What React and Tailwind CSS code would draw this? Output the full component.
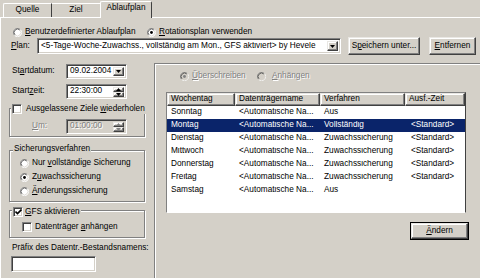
import React from 'react';

const sunken =
  'border border-t-[#808080] border-l-[#808080] border-b-white border-r-white shadow-[inset_1px_1px_0_#404040,inset_-1px_-1px_0_#d4d0c8]';
const raised =
  'border border-t-[#e9e7e3] border-l-[#e9e7e3] border-b-[#404040] border-r-[#404040] shadow-[inset_-1px_-1px_0_#808080,inset_1px_1px_0_#fff]';
const etched = 'border border-[#808080] shadow-[inset_1px_1px_0_#fff,1px_1px_0_#fff]';
const grayText = 'text-[#808080] [text-shadow:1px_1px_0_#fff]';

const Radio = ({ checked, disabled }) => (
  <svg width="9" height="9" viewBox="0 0 12 12" className="shrink-0">
    <circle cx="6" cy="6" r="5.5" fill={disabled ? '#d4d0c8' : '#fff'} />
    <path d="M2.1 9.9 A5.5 5.5 0 0 1 9.9 2.1" stroke="#808080" fill="none" />
    <path d="M2.8 9.2 A4.5 4.5 0 0 1 9.2 2.8" stroke="#404040" fill="none" />
    <path d="M9.9 2.1 A5.5 5.5 0 0 1 2.1 9.9" stroke="#fff" fill="none" />
    <path d="M9.2 2.8 A4.5 4.5 0 0 1 2.8 9.2" stroke="#d4d0c8" fill="none" />
    {checked && <circle cx="6" cy="6" r="1.9" fill={disabled ? '#808080' : '#000'} />}
  </svg>
);

const Check = ({ checked }) => (
  <span className={`w-[10px] h-[10px] shrink-0 bg-white flex items-center justify-center ${sunken}`}>
    {checked && (
      <svg width="7" height="6" viewBox="0 0 7 6">
        <path d="M0.5 2.5 L2.5 4.5 L6.5 0.5" stroke="#000" strokeWidth="1.6" fill="none" />
      </svg>
    )}
  </span>
);

const DropBtn = () => (
  <span className={`w-[11px] h-full shrink-0 bg-[#d4d0c8] flex items-center justify-center ${raised}`}>
    <svg width="5" height="3" viewBox="0 0 5 3">
      <path d="M0 0h5L2.5 3z" fill="#000" />
    </svg>
  </span>
);

const Spin = ({ disabled }) => {
  const c = disabled ? '#808080' : '#000';
  return (
    <span className="w-[11px] h-full shrink-0 flex flex-col">
      <span className={`flex-1 bg-[#d4d0c8] flex items-center justify-center ${raised}`}>
        <svg width="5" height="3" viewBox="0 0 5 3">
          <path d="M0 3h5L2.5 0z" fill={c} />
        </svg>
      </span>
      <span className={`flex-1 bg-[#d4d0c8] flex items-center justify-center ${raised}`}>
        <svg width="5" height="3" viewBox="0 0 5 3">
          <path d="M0 0h5L2.5 3z" fill={c} />
        </svg>
      </span>
    </span>
  );
};

const U = ({ children }) => <span className="underline underline-offset-1">{children}</span>;

const rows = [
  ['Sonntag', '<Automatische Na...', 'Aus', ''],
  ['Montag', '<Automatische Na...', 'Vollständig', '<Standard>'],
  ['Dienstag', '<Automatische Na...', 'Zuwachssicherung', '<Standard>'],
  ['Mittwoch', '<Automatische Na...', 'Zuwachssicherung', '<Standard>'],
  ['Donnerstag', '<Automatische Na...', 'Zuwachssicherung', '<Standard>'],
  ['Freitag', '<Automatische Na...', 'Zuwachssicherung', '<Standard>'],
  ['Samstag', '<Automatische Na...', 'Aus', ''],
];

const cols = ['w-[68px]', 'w-[85px]', 'w-[85px]', 'w-[60px]'];

export default function App() {
  return (
    <div className="w-[480px] h-[278px] overflow-hidden bg-[#d4d0c8] text-black text-[8.25px] leading-none whitespace-nowrap flex flex-col font-['Liberation_Sans',Arial,sans-serif]">
      {/* Tabs */}
      <div className="h-[17px] shrink-0 flex items-end pl-[3px] relative z-10">
        <div className="w-[49px] h-[14px] flex items-center justify-center border-t border-l border-white border-r border-r-[#404040] rounded-tl-[2px]">
          Quelle
        </div>
        <div className="w-[48px] h-[14px] flex items-center justify-center border-t border-white">
          Ziel
        </div>
        <div className="w-[52px] h-[17px] -mb-px pb-[3px] bg-[#d4d0c8] flex items-center justify-center border-t border-l border-white border-r border-r-[#404040] rounded-t-[2px]">
          Ablaufplan
        </div>
      </div>

      {/* Panel */}
      <div className="flex-1 border-t border-l border-white flex flex-col">
        <div className="mt-[9px] h-[10px] flex items-center pl-[12px]">
          <div className="w-[134px] flex items-center gap-[3px]">
            <Radio />
            <span>
              <U>B</U>enutzerdefinierter Ablaufplan
            </span>
          </div>
          <div className="flex items-center gap-[3px]">
            <Radio checked />
            <span>
              <U>R</U>otationsplan verwenden
            </span>
          </div>
        </div>

        <div className="h-[18px] flex items-center pl-[10px]">
          <span className="w-[26px]">
            <U>P</U>lan:
          </span>
          <div className={`w-[304px] h-[16px] bg-white flex items-center p-[2px] ${sunken}`}>
            <span className="flex-1 pl-px overflow-hidden">
              {'<5-Tage-Woche-Zuwachss., vollständig am Mon., GFS aktiviert> by Hevele'}
            </span>
            <DropBtn />
          </div>
          <button className={`ml-[7px] w-[72px] h-[18px] flex items-center justify-center ${raised}`}>
            <span>
              S<U>p</U>eichern unter...
            </span>
          </button>
          <button className={`ml-[9px] w-[47px] h-[18px] flex items-center justify-center ${raised}`}>
            <span>
              <U>E</U>ntfernen
            </span>
          </button>
        </div>

        <div className="flex mt-[8px]">
          {/* Left column */}
          <div className="ml-[8px] w-[136px] pt-px flex flex-col shrink-0">
            <div className="h-[15px] flex items-center pl-[3px]">
              <span className="w-[54px]">
                St<U>a</U>rtdatum:
              </span>
              <div className={`w-[61px] h-full bg-white flex items-center p-[2px] ${sunken}`}>
                <span className="flex-1 pl-px">09.02.2004</span>
                <DropBtn />
              </div>
            </div>
            <div className="mt-[5px] h-[15px] flex items-center pl-[3px]">
              <span className="w-[54px]">
                Start<U>z</U>eit:
              </span>
              <div className={`w-[61px] h-full bg-white flex items-center p-[2px] ${sunken}`}>
                <span className="flex-1 pl-px">22:30:00</span>
                <Spin />
              </div>
            </div>

            <div className={`mt-[9px] pb-[2px] flex flex-col ${etched}`}>
              <div className="-mt-[5px] ml-px px-px h-[10px] w-fit bg-[#d4d0c8] flex items-center gap-[4px]">
                <Check />
                <span>
                  Ausgelassene Ziele <U>w</U>iederholen
                </span>
              </div>
              <div className="mt-[5px] h-[15px] flex items-center">
                <span className={`w-[56px] pl-[22px] ${grayText}`}>
                  <U>U</U>m:
                </span>
                <div className={`w-[61px] h-full bg-[#d4d0c8] flex items-center p-[2px] ${sunken}`}>
                  <span className={`flex-1 pl-px ${grayText}`}>01:00:00</span>
                  <Spin disabled />
                </div>
              </div>
            </div>

            <div className={`mt-[13px] pb-[5px] flex flex-col ${etched}`}>
              <div className="-mt-[7px] ml-[3px] px-px h-[10px] w-fit bg-[#d4d0c8] flex items-center">
                Sicherungsverfahren
              </div>
              {[
                [
                  <>
                    Nur <U>v</U>ollständige Sicherung
                  </>,
                  false,
                ],
                [
                  <>
                    Z<U>u</U>wachssicherung
                  </>,
                  true,
                ],
                [
                  <>
                    <U>Ä</U>nderungssicherung
                  </>,
                  false,
                ],
              ].map(([label, on], i) => (
                <div key={i} className="mt-[4px] h-[10px] ml-[10px] flex items-center gap-[3px]">
                  <Radio checked={on} />
                  <span>{label}</span>
                </div>
              ))}
            </div>

            <div className={`mt-[8px] pb-[5px] flex flex-col ${etched}`}>
              <div className="-mt-[4px] ml-[2px] px-px h-[10px] w-fit bg-[#d4d0c8] flex items-center gap-[2px]">
                <Check checked />
                <span>
                  <U>G</U>FS aktivieren
                </span>
              </div>
              <div className="mt-[5px] h-[10px] ml-[12px] flex items-center gap-[3px]">
                <Check />
                <span>
                  Datenträger <U>a</U>nhängen
                </span>
              </div>
            </div>

            <div className="mt-[5px] h-[10px] pl-[3px] flex items-center">Präfix des Datentr.-Bestandsnamens:</div>
            <div className={`mt-[3px] ml-[2px] w-[85px] h-[16px] bg-white shrink-0 ${sunken}`} />
          </div>

          {/* Right group */}
          <div className={`ml-[9px] w-[330px] h-[260px] shrink-0 flex flex-col ${etched}`}>
            <div className="mt-[7px] h-[10px] pl-[25px] flex items-center">
              <div className="w-[77px] flex items-center gap-[3px]">
                <Radio checked disabled />
                <span className={grayText}>
                  <U>Ü</U>berschreiben
                </span>
              </div>
              <div className="flex items-center gap-[6px]">
                <Radio disabled />
                <span className={grayText}>
                  <U>A</U>nhängen
                </span>
              </div>
            </div>

            <div className="mt-[11px] ml-[11px] w-[300px] h-[121px] bg-white flex flex-col border border-t-[#808080] border-l-[#808080] border-b-white border-r-[#404040]">
              <div className="flex h-[13px] shrink-0">
                {['Wochentag', 'Datenträgername', 'Verfahren', 'Ausf.-Zeit'].map((h, i) => (
                  <div key={h} className={`${cols[i]} h-full bg-[#d4d0c8] flex items-center pl-[3px] ${raised}`}>
                    {h}
                  </div>
                ))}
              </div>
              {rows.map((r, ri) => (
                <div
                  key={r[0]}
                  className={`flex h-[13px] shrink-0 items-center ${ri === 1 ? 'bg-[#0a246a] text-white' : ''}`}
                >
                  {r.map((c, ci) => (
                    <span key={ci} className={`${cols[ci]} overflow-hidden ${ci === 3 ? 'pl-[6px]' : 'pl-[4px]'}`}>
                      {c}
                    </span>
                  ))}
                </div>
              ))}
            </div>

            <div className="mt-[9px] ml-[255px] w-[59px] h-[18px] border border-black flex">
              <button className={`flex-1 flex items-center justify-center ${raised}`}>
                <span>
                  <U>Ä</U>ndern
                </span>
              </button>
            </div>
          </div>
        </div>
      </div>
    </div>
  );
}
